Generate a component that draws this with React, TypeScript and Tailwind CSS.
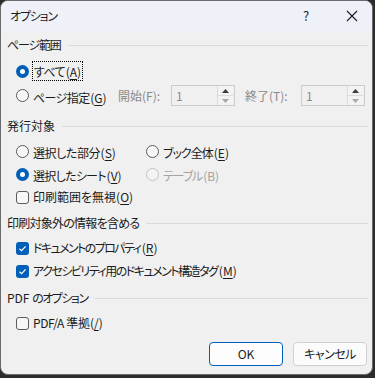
import React from "react";

const font = "font-['Noto_Sans_CJK_JP','Noto_Sans',sans-serif] [font-feature-settings:'palt']";

function Header({ label, pre, className, tr }: { label: string; pre?: string; className?: string; tr?: string }) {
  return (
    <div className={`flex items-center h-[22px] ${className ?? ""}`}>
      <span className="text-[12px] text-[#1b1b1b] whitespace-nowrap">
        {pre}
        <span className={tr ?? ""}>{label}</span>
      </span>
      <div className="flex-1 h-px bg-[#dadada] ml-[7px]" />
    </div>
  );
}

function Radio({ checked, disabled }: { checked?: boolean; disabled?: boolean }) {
  if (checked) {
    return (
      <span className="w-[13px] h-[13px] rounded-full bg-[#005fb8] flex items-center justify-center shrink-0">
        <span className="w-[5px] h-[5px] rounded-full bg-white" />
      </span>
    );
  }
  return (
    <span
      className={`w-[13px] h-[13px] rounded-full border shrink-0 ${
        disabled ? "border-[#c4c4c4] bg-[#f3f3f3]" : "border-[#5c5c5c] bg-[#f7f7f7]"
      }`}
    />
  );
}

function Check({ checked }: { checked?: boolean }) {
  if (checked) {
    return (
      <span className="w-[13px] h-[13px] rounded-[3px] bg-[#005fb8] flex items-center justify-center shrink-0">
        <svg width="9" height="9" viewBox="0 0 9 9">
          <path d="M1.5 4.7 L3.6 6.7 L7.6 2.4" stroke="white" strokeWidth="1.2" fill="none" />
        </svg>
      </span>
    );
  }
  return <span className="w-[13px] h-[13px] rounded-[3px] border border-[#5c5c5c] bg-[#f7f7f7] shrink-0" />;
}

// tr: letter-spacing for the Japanese part, with a margin that gives back the trailing gap
function Label({ text, acc, disabled, tr }: { text: string; acc: string; disabled?: boolean; tr?: string }) {
  return (
    <span className={`text-[12px] whitespace-nowrap ${disabled ? "text-[#a3a3a3]" : "text-[#1b1b1b]"}`}>
      <span className={`inline-block ${tr ?? ""}`}>{text}</span>(
      {disabled ? acc : <span className="underline underline-offset-2">{acc}</span>})
    </span>
  );
}

function Spin() {
  return (
    <div className="w-[64px] h-[21px] border border-[#cccccc] bg-[#f0f0f0] flex items-center">
      <span className="flex-1 pl-[4px] text-[12px] text-[#8a8a8a]">1</span>
      <div className="w-[16px] h-[19px] flex flex-col border-l border-[#dcdcdc] mr-px">
        <div className="flex-1 flex items-center justify-center bg-[#f3f3f3] border-b border-[#dcdcdc]">
          <svg width="7" height="4" viewBox="0 0 7 4">
            <path d="M0 4 L3.5 0 L7 4 Z" fill="#3a3a3a" />
          </svg>
        </div>
        <div className="flex-1 flex items-center justify-center bg-[#f3f3f3]">
          <svg width="7" height="4" viewBox="0 0 7 4">
            <path d="M0 0 L3.5 4 L7 0 Z" fill="#a8a8a8" />
          </svg>
        </div>
      </div>
    </div>
  );
}

export default function App() {
  return (
    <div className={`w-[375px] h-[378px] bg-[#2c2c2c] ${font}`}>
      <div className="w-[373px] h-[375px] rounded-[8px] overflow-hidden border border-[#6b6b6b] bg-[#f0f0f0] flex flex-col">
        {/* title bar */}
        <div className="h-[30px] bg-[#eef1f8] flex items-center pl-[9px] shrink-0">
          <span className="text-[12px] text-[#1b1b1b] flex-1 tracking-[-1.2px]">オプション</span>
          <span className="text-[13px] text-[#1b1b1b] w-[50px] text-center">?</span>
          <div className="w-[41px] flex items-center justify-center">
            <svg width="12" height="12" viewBox="0 0 12 12">
              <path d="M1 1 L11 11 M11 1 L1 11" stroke="#1b1b1b" strokeWidth="1.1" />
            </svg>
          </div>
        </div>

        <div className="flex flex-col pl-[6px] pr-[4px]">
          <Header label="ページ範囲" className="mt-[3px]" tr="tracking-[-1.2px]" />
          <div className="flex items-center h-[22px] mt-[4px] pl-[9px] gap-[4px]">
            <Radio checked />
            <span className="outline-1 outline-dotted outline-black px-px leading-[17px]">
              <Label text="すべて" acc="A" tr="tracking-[-0.6px] mr-[0.6px]" />
            </span>
          </div>
          <div className="flex items-center h-[23px] mt-[2px] pl-[9px]">
            <Radio />
            <span className="ml-[4px] w-[85px]">
              <Label text="ページ指定" acc="G" tr="tracking-[-0.6px] mr-[0.6px]" />
            </span>
            <span className="text-[12px] text-[#8a8a8a] w-[53px]">開始(F):</span>
            <Spin />
            <span className="text-[12px] text-[#8a8a8a] ml-[10px] w-[56px]">終了(T):</span>
            <Spin />
          </div>

          <Header label="発行対象" className="mt-[8px]" />
          <div className="flex items-center h-[22px] mt-[3px] pl-[9px]">
            <Radio />
            <span className="ml-[4px] w-[113px]">
              <Label text="選択した部分" acc="S" tr="tracking-[-0.4px] mr-[0.4px]" />
            </span>
            <Radio />
            <span className="ml-[4px]">
              <Label text="ブック全体" acc="E" tr="tracking-[-1px] mr-[1px]" />
            </span>
          </div>
          <div className="flex items-center h-[22px] mt-[1px] pl-[9px]">
            <Radio checked />
            <span className="ml-[4px] w-[113px]">
              <Label text="選択したシート" acc="V" tr="tracking-[-0.7px] mr-[0.7px]" />
            </span>
            <Radio disabled />
            <span className="ml-[4px]">
              <Label text="テーブル" acc="B" disabled tr="tracking-[-1.2px] mr-[1.2px]" />
            </span>
          </div>
          <div className="flex items-center h-[22px] mt-[1px] pl-[9px] gap-[4px]">
            <Check />
            <Label text="印刷範囲を無視" acc="O" />
          </div>

          <Header label="印刷対象外の情報を含める" className="mt-[4px]" tr="tracking-[-0.75px]" />
          <div className="flex items-center h-[22px] mt-[3px] pl-[9px] gap-[4px]">
            <Check checked />
            <Label text="ドキュメントのプロパティ" acc="R" tr="tracking-[-1.6px] mr-[1.6px]" />
          </div>
          <div className="flex items-center h-[22px] mt-[1px] pl-[9px] gap-[4px]">
            <Check checked />
            <Label text="アクセシビリティ用のドキュメント構造タグ" acc="M" tr="tracking-[-1.5px] mr-[1.5px]" />
          </div>

          <Header pre="PDF " label="のオプション" className="mt-[5px]" tr="tracking-[-1.5px]" />
          <div className="flex items-center h-[22px] mt-[3px] pl-[9px] gap-[4px]">
            <Check />
            <Label text="PDF/A 準拠" acc="/" tr="tracking-[-0.4px] mr-[0.4px]" />
          </div>

          <div className="flex justify-end gap-[10px] mt-[8px] pr-[1px]">
            <button className="w-[74px] h-[24px] rounded-[4px] border border-[#005fb8] bg-[#fdfdfd] text-[12px] text-[#1b1b1b]">
              OK
            </button>
            <button className="w-[74px] h-[24px] rounded-[4px] border border-[#d0d0d0] bg-[#fbfbfb] text-[12px] text-[#1b1b1b] tracking-[-0.5px]">
              キャンセル
            </button>
          </div>
        </div>
      </div>
    </div>
  );
}
